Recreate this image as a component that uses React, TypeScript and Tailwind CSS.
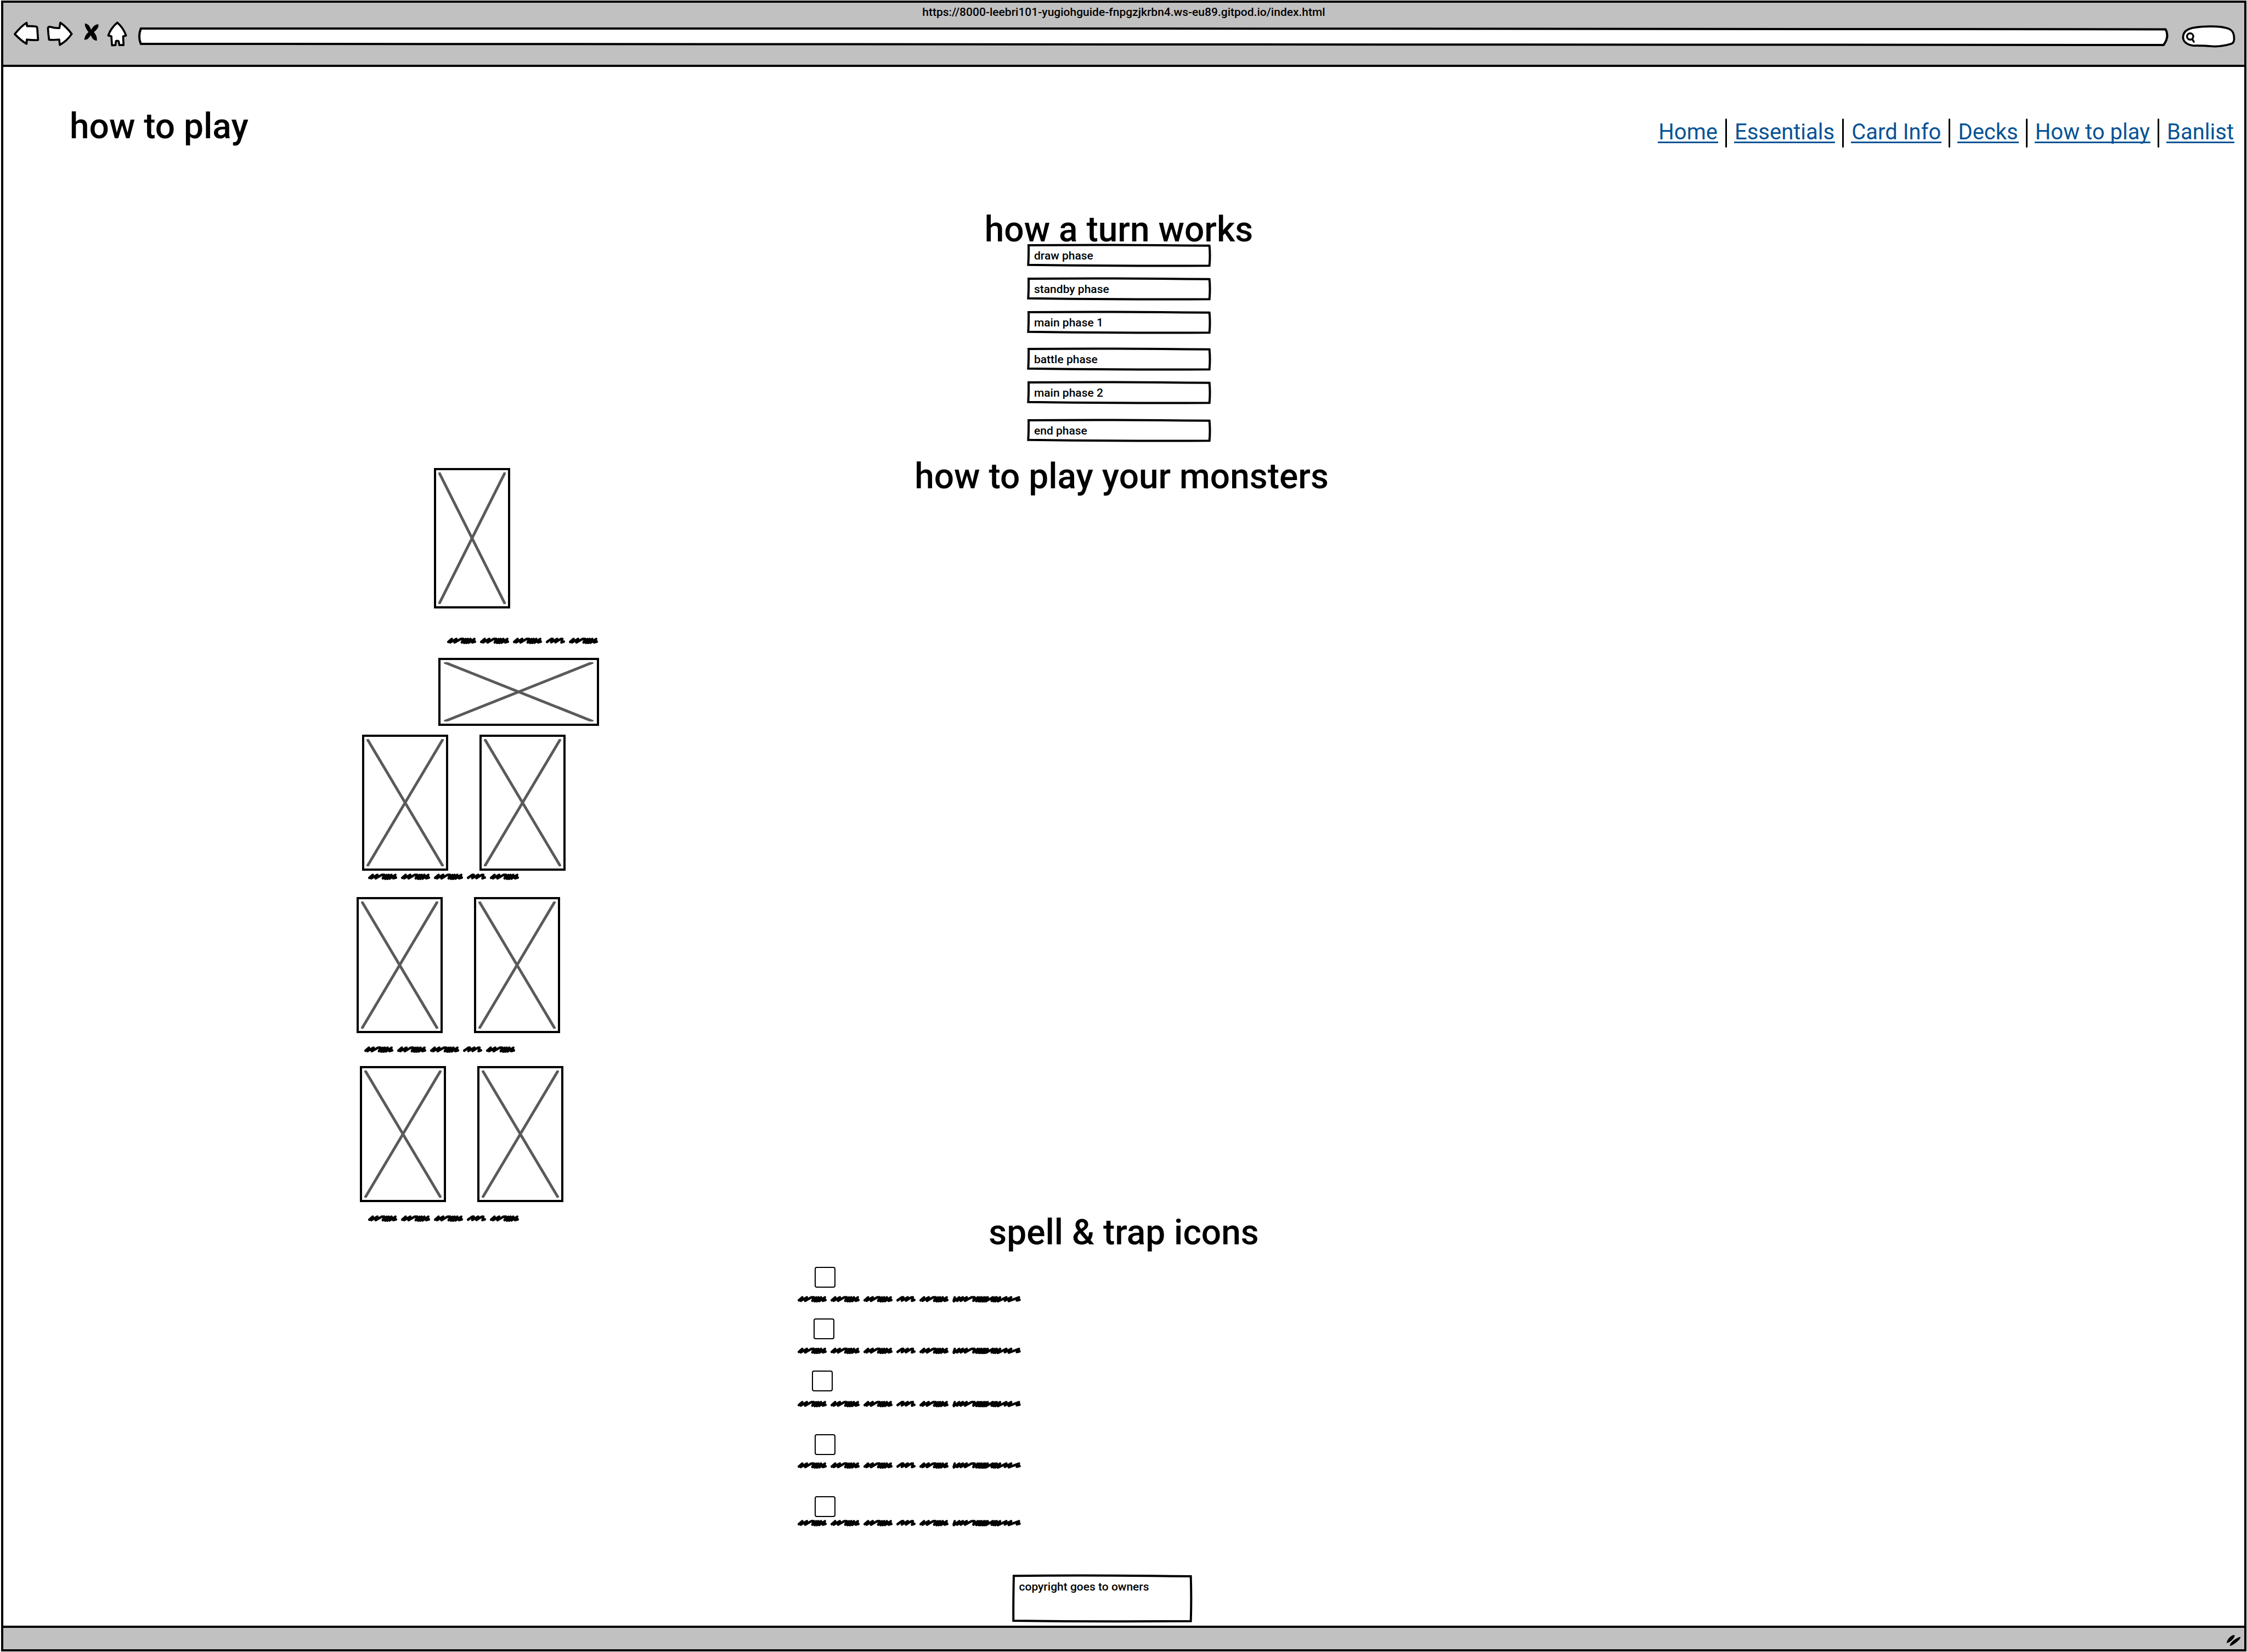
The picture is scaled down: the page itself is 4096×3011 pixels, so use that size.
import React from "react";

const links = ["Home", "Essentials", "Card Info", "Decks", "How to play", "Banlist"];

const phases = [
  { name: "draw phase", gap: "" },
  { name: "standby phase", gap: "mt-5" },
  { name: "main phase 1", gap: "mt-5" },
  { name: "battle phase", gap: "mt-[26px]" },
  { name: "main phase 2", gap: "mt-5" },
  { name: "end phase", gap: "mt-7" },
];

const icons = [
  { label: "icon 1", row: "", box: "ml-[31px]", line: "mt-[15px]" },
  { label: "icon 2", row: "mt-[29px]", box: "ml-[29px]", line: "mt-[15px]" },
  { label: "icon 3", row: "mt-[30px]", box: "ml-[26px]", line: "mt-[17px]" },
  { label: "icon 4", row: "mt-[49px]", box: "ml-[31px]", line: "mt-[13px]" },
  { label: "icon 5", row: "mt-[50px]", box: "ml-[31px]", line: "mt-[5px]" },
];

function SketchFrame({ tall = false }: { tall?: boolean }) {
  return (
    <svg
      className="pointer-events-none absolute inset-0 h-full w-full overflow-visible"
      viewBox="0 0 100 100"
      preserveAspectRatio="none"
      aria-hidden="true"
    >
      <path
        d={
          tall
            ? "M.9 2.5Q45 .5 99.3 3.5Q99.7 50 99.3 97.5Q50 99 .7 96.5Q.6 60 .9 2.5Z"
            : "M.9 5Q45 1 99.3 7Q99.8 50 99.3 96Q50 98 .7 92Q1 50 .9 5Z"
        }
        fill="none"
        stroke="#000"
        strokeWidth="4"
        strokeLinejoin="miter"
        vectorEffect="non-scaling-stroke"
      />
    </svg>
  );
}

function Heading({ children }: { children: React.ReactNode }) {
  return <h2 className="text-center text-[64px] leading-10 font-medium whitespace-nowrap">{children}</h2>;
}

function Picture({ size }: { size: string }) {
  return (
    <div role="img" aria-label="picture" className={`relative border-4 border-black ${size}`}>
      <svg className="absolute inset-1 h-[calc(100%-8px)] w-[calc(100%-8px)]" viewBox="0 0 100 100" preserveAspectRatio="none">
        <path d="M1 0L99 100M99 0L1 100" stroke="#5a5a5a" strokeWidth="5" fill="none" vectorEffect="non-scaling-stroke" />
      </svg>
    </div>
  );
}

function PicturePair() {
  return (
    <div className="flex gap-[57px]">
      <Picture size="h-[248px] w-[157px]" />
      <Picture size="h-[248px] w-[157px]" />
    </div>
  );
}

const wordPath =
  "M8 28L31 9L21 31L62 9L50 31L92 9L108 9L98 31L124 10L114 34L138 9L128 34L156 9L144 33L182 9L168 31L186 26";
const shortPath = "M8 28L36 9L46 9L36 30L76 9L64 30L98 10L110 9L104 31L120 26";
const longPath =
  "M9 30L16 9L10 34L46 9L32 31L70 9L56 31L96 9L84 31L128 9L148 9L140 31L170 9L160 33L182 10L174 33L194 9L184 34L212 9L200 35L224 10L212 34L236 9L224 33L270 9L262 31L284 10L274 33L296 9L286 34L318 9L304 34L360 9L350 30L392 9L376 33L444 9L430 29L448 25";

function Word({ kind = "word" }: { kind?: "word" | "short" | "long" }) {
  const box = kind === "word" ? "0 0 194 42" : kind === "short" ? "0 0 128 42" : "0 0 457 42";
  const size = kind === "word" ? "w-[53px]" : kind === "short" ? "w-[35px]" : "w-[125px]";
  const d = kind === "word" ? wordPath : kind === "short" ? shortPath : longPath;
  return (
    <svg className={`h-3 shrink-0 ${size}`} viewBox={box} preserveAspectRatio="none" aria-hidden="true">
      <path d={d} fill="none" stroke="#000" strokeWidth="16" strokeLinecap="round" strokeLinejoin="round" />
    </svg>
  );
}

function Scribble({ long = false }: { long?: boolean }) {
  return (
    <div className="flex h-3 gap-[7px]">
      <Word />
      <Word />
      <Word />
      <Word kind="short" />
      <Word />
      {long && <Word kind="long" />}
    </div>
  );
}

function Toolbar() {
  return (
    <header className="border-b-4 border-black bg-[#c1c1c1]">
      <p className="pt-px text-center text-[21px] leading-8 font-medium">
        https://8000-leebri101-yugiohguide-fnpgzjkrbn4.ws-eu89.gitpod.io/index.html
      </p>
      <div className="flex h-20 items-start pr-4 pl-[18px]">
        <button aria-label="Back" className="h-[45px] w-12">
          <svg className="h-full w-full" viewBox="30 46 58 54">
            <path d="M33.5 75Q47 58 59.6 50L60.6 57.5Q72 57 81.5 58.5Q83 59 83.3 65L84.8 88Q72 88.5 60 87L59.5 96.5Q48 90 33.5 75Z" fill="#fff" stroke="#000" strokeWidth="4.5" strokeLinejoin="round" />
          </svg>
        </button>
        <button aria-label="Forward" className="ml-[13px] h-[46px] w-[49px]">
          <svg className="h-full w-full" viewBox="105 46 60 56">
            <path d="M112 59Q124 62.5 133.5 62L135.5 50Q149 59 161 75Q150 91 134.5 99.5L133 87.5Q122 89 110.5 88Q108.5 75 108 63Q108 59 112 59Z" fill="#fff" stroke="#000" strokeWidth="4.5" strokeLinejoin="round" />
          </svg>
        </button>
        <button aria-label="Stop" className="mt-[3px] ml-[18px] h-[34px] w-[30px]">
          <svg className="h-full w-full" viewBox="186 50 36 41">
            <path d="M189 52Q198 52 203 66Q209 54 219 54Q221 62 209 71Q217 80 215.5 90Q207 90 202 78Q196 89 188 88Q188 79 197 71Q189 61 189 52Z" />
          </svg>
        </button>
        <button aria-label="Home" className="ml-3 h-[47px] w-[39px]">
          <svg className="h-full w-full" viewBox="236 44 48 58">
            <path d="M260.4 48Q274 60 280 77L273.5 79L274.5 98.5L265 98.5L263.5 90Q260 87.5 257 90L256.5 98.5L248.5 99L247 78.5L240 77Q246 60 260.4 48Z" fill="#fff" stroke="#000" strokeWidth="4.5" strokeLinejoin="round" />
          </svg>
        </button>
        <div className="relative mt-3 ml-5 h-[34px] flex-1">
          <svg className="absolute inset-0 h-full w-full overflow-visible" viewBox="0 0 100 100" preserveAspectRatio="none" aria-hidden="true">
            <path d="M.1 6L50 6L99.8 10Q100 50 99.7 94L50 91L.1 88Q-.05 50 .1 6Z" fill="#fff" stroke="#000" strokeWidth="4" strokeLinejoin="round" vectorEffect="non-scaling-stroke" />
          </svg>
          <input aria-label="Address" className="relative h-full w-full bg-transparent px-3 text-[21px] outline-none" />
        </div>
        <div className="relative mt-2 ml-[22px] h-[41px] w-[98px]">
          <svg className="absolute inset-0 h-full w-full" viewBox="210.5 57 120 50" aria-hidden="true">
            <path d="M213.5 83C214 70 226 64 240 62C260 58.5 295 58.5 310 63C323 66 327.5 73 327.5 88Q327 96 322 98Q300 105 280 104Q255 102 237 102.5C222 101 213 93 213.5 83Z" fill="#fff" stroke="#000" strokeWidth="4.5" strokeLinejoin="round" />
            <circle cx="229.3" cy="82" r="7" fill="#fff" stroke="#000" strokeWidth="4.2" />
            <path d="M234 87.5L237.5 94" stroke="#000" strokeWidth="4.2" strokeLinecap="round" />
          </svg>
          <input aria-label="Search" className="relative h-full w-full bg-transparent pr-3 pl-8 text-[21px] outline-none" />
        </div>
      </div>
    </header>
  );
}

function Monsters() {
  return (
    <section className="mt-11 grid grid-cols-[1fr_auto_1fr] pr-2">
      <div className="grid grid-cols-[644fr_1018fr] pt-1">
        <div className="col-start-2">
          <div className="pl-[141px]">
            <Picture size="h-64 w-[139px]" />
          </div>
          <div className="mt-[53px] pl-[165px]">
            <Scribble />
          </div>
          <div className="mt-[25px] pl-[149px]">
            <Picture size="h-[124px] w-[293px]" />
          </div>
          <div className="mt-4 pl-[10px]">
            <PicturePair />
          </div>
          <div className="mt-[5px] pl-[21px]">
            <Scribble />
          </div>
          <div className="mt-[31px]">
            <PicturePair />
          </div>
          <div className="mt-6 pl-[14px]">
            <Scribble />
          </div>
          <div className="mt-6 pl-[6px]">
            <PicturePair />
          </div>
          <div className="mt-6 pl-[21px]">
            <Scribble />
          </div>
        </div>
      </div>
      <Heading>how to play your monsters</Heading>
    </section>
  );
}

export default function App() {
  return (
    <div className="flex min-h-screen bg-white pt-px pr-px pb-px pl-[2px] font-['Roboto',sans-serif] text-black">
      <div className="flex flex-1 flex-col border-4 border-black">
        <Toolbar />
        <main className="flex-1">
          <div className="flex items-start justify-between pt-[89px] pr-[18px] pl-[121px]">
            <h1 className="text-[64px] leading-10 font-medium whitespace-nowrap">how to play</h1>
            <nav aria-label="Main" className="mt-[5px] flex h-[53px] text-[40px] leading-[50px]">
              {links.map((link, i) => (
                <div key={link} className="flex">
                  {i > 0 && <span className="mx-[13px] w-[3px] rounded-full bg-black" />}
                  <a href="#" className="h-[45px] border-b-[3px] border-[#065395] px-px whitespace-nowrap text-[#065395]">
                    {link}
                  </a>
                </div>
              ))}
            </nav>
          </div>

          <section className="mt-[130px] pr-[18px]">
            <Heading>how a turn works</Heading>
            <div className="mx-auto mt-[6px] flex w-[335px] flex-col">
              {phases.map((p) => (
                <div key={p.name} className={`relative h-[41px] ${p.gap}`}>
                  <SketchFrame />
                  <input
                    aria-label={p.name}
                    defaultValue={p.name}
                    className="relative h-full w-full bg-transparent px-[13px] text-[21px] font-medium outline-none"
                  />
                </div>
              ))}
            </div>
          </section>

          <Monsters />

          <section>
            <Heading>spell &amp; trap icons</Heading>
            <div className="mt-[42px] grid grid-cols-[1448fr_2637fr]">
              <ul className="col-start-2">
                {icons.map((icon) => (
                  <li key={icon.label} className={icon.row}>
                    <input
                      type="checkbox"
                      aria-label={icon.label}
                      className={`block size-[38px] appearance-none rounded border-2 border-black ${icon.box}`}
                    />
                    <div className={icon.line}>
                      <Scribble long />
                    </div>
                  </li>
                ))}
              </ul>
            </div>
          </section>
        </main>
        <div className="flex justify-center pr-20 pb-[6px]">
          <div className="relative h-[87px] w-[328px]">
            <SketchFrame tall />
            <textarea
              aria-label="Copyright"
              defaultValue="copyright goes to owners"
              className="relative block h-full w-full resize-none overflow-hidden bg-transparent px-[13px] pt-2 text-[21px] leading-7 font-medium outline-none"
            />
          </div>
        </div>
        <footer className="flex h-[43px] items-start justify-end border-t-4 border-black bg-[#c1c1c1] pr-[6px]">
          <svg className="mt-3 h-[22px] w-[27px]" viewBox="4952 3634 33 26" aria-hidden="true">
            <path d="M4953 3652.5Q4954 3645 4962 3638Q4968 3633.5 4971 3635.5Q4971 3641 4964 3647Q4957 3653 4953 3652.5ZM4960 3659Q4961 3652 4971 3645Q4981 3638 4984 3639.5Q4984 3644 4975 3651Q4965 3659 4960 3659Z" />
          </svg>
        </footer>
      </div>
    </div>
  );
}
